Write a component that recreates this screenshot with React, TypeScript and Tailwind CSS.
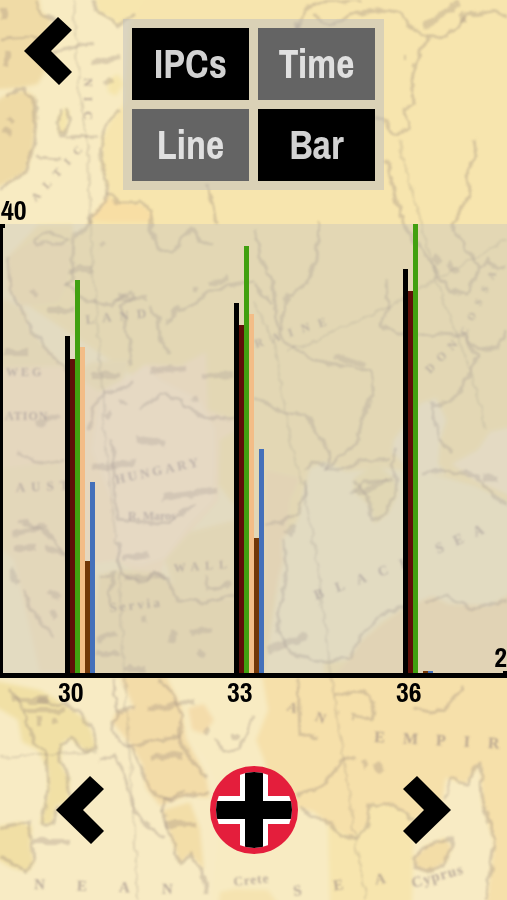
import { useState } from "react";

type Series = { name: string; color: string };
type Round = { label: string; values: number[] };

const MAX_VALUE = 40;

const SERIES: Series[] = [
  { name: "Germany", color: "bg-black" },
  { name: "Soviet Union", color: "bg-[#5e0f08]" },
  { name: "United States", color: "bg-[#41a010]" },
  { name: "United Kingdom", color: "bg-[#f3bd87]" },
  { name: "Italy", color: "bg-[#713607]" },
  { name: "France", color: "bg-[#4470ba]" },
];

const ROUNDS: Round[] = [
  { label: "30", values: [30, 28, 35, 29, 10, 17] },
  { label: "33", values: [33, 31, 38, 32, 12, 20] },
  { label: "36", values: [36, 34, 40, 0, 0.2, 0.2] },
];

/* Filled land and sea areas of the map. */
const AREAS: { fill: string; d: string }[] = [
  { fill: "#f8ebc2", d: "M-9 -9H516V909H-9Z" },
  { fill: "#f0dba6", d: "M-9 -9H38L41 12L52 20L44 40L47 68L38 84L20 88L-9 90Z" },
  { fill: "#efdaa5", d: "M7 94L24 90L35 97L36 120L33 148L26 172L10 181L-9 190V104Z" },
  { fill: "#f7e6ae", d: "M93 -9L98 12L110 18L118 26L134 14L152 -9Z" },
  { fill: "#f5e5ab", d: "M58 118L64 108L69 110L66 132L59 134Z" },
  { fill: "#f5e5ab", d: "M108 80L118 74L124 84L116 96L108 92Z" },
  { fill: "#f7e5ae", d: "M150 -9H516V909H330L322 600L230 500L140 380L20 300L10 255L38 225L72 224L74 236L90 222L92 215L106 205L108 190L101 165L102 138L112 118L124 104L130 20Z" },
  { fill: "#f8dea4", d: "M108 196L118 202L140 204L152 212L150 222L110 222L90 220Z" },
  { fill: "#f6e1b0", d: "M8 256L35 240L72 244L66 285L58 302L20 306L8 290Z" },
  { fill: "#f5e3b2", d: "M8 300L26 312L30 330L48 350L72 374L92 362L130 360L100 440L70 470L-9 480V300Z" },
  { fill: "#fae4be", d: "M-9 368L60 366L100 392L130 376L150 364L180 366L206 352L208 410L246 424L220 440L218 500L190 532L165 560L160 575L140 574L116 560L70 566L40 525L40 500L-9 500Z" },
  { fill: "#fce8c6", d: "M100 392L130 376L146 364L160 380L200 400L215 430L214 500L190 524L165 558L140 566L118 560L112 500L92 450Z" },
  { fill: "#f8e4b8", d: "M-9 470L60 460L80 560L78 673H40L14 560L-9 540Z" },
  { fill: "#f3e0ad", d: "M98 575L120 570L160 573L178 590L235 594L280 570L264 676H90Z" },
  { fill: "#f5e3b1", d: "M165 560L190 532L235 520L268 500L284 520L260 600L178 600Z" },
  { fill: "#f6dfb0", d: "M266 470L300 478L290 500L284 560L266 620Z" },
  { fill: "#f6ebc3", d: "M310 468L326 462L346 472L380 468L420 472L446 478L475 486L516 506V590L490 606L448 604L432 596L404 608L382 622L362 640L348 660L312 664L290 650L276 632L278 600L284 580L282 540L298 520L304 490Z" },
  { fill: "#f4e5ae", d: "M354 478L376 464L394 478L398 494L388 514L374 524L370 506L354 492Z" },
  { fill: "#f6eac6", d: "M420 404L436 398L446 420L440 440L438 464L446 474L420 474L404 464L392 452L394 440Z" },
  { fill: "#f9eac6", d: "M452 464L478 450L490 432L516 426V498L474 480Z" },
  { fill: "#f5dfaf", d: "M404 608L432 596L448 604L490 606L516 592V680H330L348 660L362 640Z" },
  { fill: "#f8ebc4", d: "M-9 676H120L146 688L182 706L184 732L206 760L220 792L216 850L210 909H-9Z" },
  { fill: "#f1e0a5", d: "M-9 680L40 690L64 704L84 718L92 732L96 748L86 752L70 738L62 744L60 762L70 780L68 802L56 806L52 824L40 824L48 792L48 770L38 750L22 742L18 720L-9 704Z" },
  { fill: "#f1dfa5", d: "M-9 828L20 822L32 826L30 846L34 862L28 872L12 868L-9 856Z" },
  { fill: "#f3dca8", d: "M120 676L166 676L182 708L186 738L206 776L210 798L186 796L160 806L146 788L142 764L130 744L112 722L116 712L134 708Z" },
  { fill: "#f3dea8", d: "M162 810L190 802L200 828L204 870L190 854L180 864L172 840Z" },
  { fill: "#f4dcaa", d: "M188 708L204 704L214 720L204 734L192 730Z" },
  { fill: "#f6e0aa", d: "M262 676H516V909H486L490 860L494 842L484 820L482 798L478 764L466 786L448 778L442 800L436 820L414 818L394 806L370 804L368 824L352 838L330 826L314 812L300 808L270 790L264 760L256 740L268 710Z" },
  { fill: "#f8ebc4", d: "M414 820L442 802L446 778L466 784L480 764L482 804L494 842L486 909H412Z" },
  { fill: "#f3dda7", d: "M414 858L426 846L444 838L452 846L446 862L430 872L416 868Z" },
  { fill: "#f5e3b0", d: "M220 892L234 889L268 890L282 909H218Z" },
];

/* Coasts, rivers and borders. */
const INK: string[] = [
  "M0 40Q20 36 38 38",
  "M36 0L41 12L56 22",
  "M93 0L98 12L110 18L118 26L134 14",
  "M7 94L24 88L35 97L36 120L33 148L26 172L10 181L0 190",
  "M120 110Q98 126 101 160L108 190L106 205L92 215",
  "M62 108L58 122L62 136L67 124L68 108",
  "M36 156L60 158 M64 137L98 136 M52 52L96 43",
  "M108 192L118 203L140 203L152 211L150 230L160 250L172 254L180 242L190 228L200 240L212 244",
  "M92 214L90 224L74 237L72 280L66 286",
  "M34 240L50 232L70 240L66 244L36 244Z",
  "M8 256L10 290L26 318L44 348L70 374",
  "M166 323L176 310L192 306L206 294L226 286L254 282",
  "M66 284L88 302L112 304L130 290L136 296L120 306L132 350L130 368",
  "M148 306L158 318L160 336L170 354",
  "M88 430L102 390L116 392L134 382",
  "M140 410L160 394L180 400L204 418L230 420L246 416",
  "M205 186L216 210L218 224",
  "M296 20L306 42L314 50",
  "M294 42L300 22L306 8L320 2L360 0",
  "M314 16L330 26L350 14L370 12L382 10L400 12L412 28L430 38L446 36L460 24L466 14L494 12L507 16",
  "M428 38L416 58L412 80L414 104L406 108L408 128L398 134L386 122L376 116",
  "M474 140L476 154L466 174L470 194L460 210L452 224L462 242L474 260L478 270L488 260L498 270L507 268",
  "M386 160L394 190L404 226L414 240L430 260L438 276L450 292L468 294L478 272",
  "M254 230L262 262L272 282L280 338L290 346L314 360L336 364L370 372L374 394L364 412L356 444L340 456L326 470",
  "M318 222L316 260L308 284L288 294L280 330",
  "M254 284L272 304",
  "M254 396L284 414L306 414L322 440L330 454L328 468L340 472L362 460L388 460",
  "M386 280L388 308L382 324L398 334L440 334L468 336L478 350L498 348L507 330",
  "M468 336L476 358L466 382L450 402L432 404L440 440L452 452",
  "M352 494L364 482L394 480",
  "M354 480L370 502L372 520L386 514L398 480L390 466L396 448",
  "M306 470L312 462L326 464",
  "M306 480L300 512L282 522L266 524",
  "M284 540L286 580L276 630L292 654L324 662L350 658L360 636L386 612L406 606",
  "M422 474L446 470L476 476L490 492L507 506",
  "M426 604L446 594L470 610L506 600",
  "M112 440L116 500L118 520L156 524L172 520L196 504",
  "M64 460L40 464L18 452",
  "M118 540L120 574L140 582L156 574L166 578L178 600L206 602L234 594L250 600",
  "M100 578L114 574L108 604",
  "M204 576L208 590L232 584",
  "M20 522L44 530L64 554L74 570",
  "M22 590L40 622L54 636",
  "M114 682L118 710L112 724L118 740L132 748L142 770L150 790L168 800L190 796L208 792",
  "M160 680L176 700L182 716L180 740L194 764L206 778",
  "M130 746L180 736",
  "M118 712L134 708",
  "M8 690L20 700L26 722L36 742L46 752L48 790L42 824L52 824L58 806L68 804L70 782L60 762L60 744L72 738L88 752L96 748L92 732L82 716L66 704L38 700",
  "M98 760L116 754L126 780L132 806L142 820L164 838",
  "M0 828L30 820L34 860L26 872L0 856",
  "M162 810L172 840L180 864L190 854L202 874L206 894",
  "M160 812L166 800L184 792",
  "M334 696L354 690L370 694L374 710L372 720L352 714L350 720",
  "M298 796L322 786L342 762L354 756",
  "M300 808L318 820L332 824L344 838L356 836L368 824L370 804L394 804L414 820",
  "M444 800L450 778L466 784L480 762L482 796L494 842L486 900",
  "M414 708L430 712L444 710L464 686",
  "M414 858L426 846L450 838L452 846L444 864L428 872L416 868Z",
  "M214 740L224 752L240 748L252 716",
  "M298 680L300 734L316 738",
];

/* Meridians and parallels. */
const GRATICULE: string[] = [
  "M74 0L80 100L88 150L90 224L98 330L106 450L118 560L124 673L130 760L138 900",
  "M254 300L276 350L290 440L304 490L318 570L332 680L342 750L354 830L366 900",
  "M398 140L420 220L440 290L470 370L486 430",
  "M0 757L96 752",
  "M288 352L386 308L507 240",
];

/* Thick soft smudges left by lettering too faint to read. */
const SMUDGES: string[] = [
  "M4 8V20 M6 54V66 M8 116L14 122 M4 130L12 134",
  "M90 62L118 58 M106 84L112 78",
  "M402 58H404 M424 26L460 2 M460 12L464 22",
  "M100 244L102 248 M68 270H94 M46 310H74 M116 298H148",
  "M4 352H28 M30 290L36 296",
  "M36 424L60 416 M92 376H120",
  "M208 284L228 278 M194 290H197",
  "M150 372L184 368 M204 376L232 374",
  "M122 402L124 406 M106 412L110 416 M194 398L196 402",
  "M136 438L166 444 M90 468L136 462",
  "M162 498L218 490",
  "M12 534L46 526 M14 548H36 M10 570L18 584 M46 548L62 554",
  "M124 558L148 554 M124 578L164 576",
  "M144 616L146 624",
  "M172 642L174 632 M190 634L212 630 M200 656L202 650",
  "M96 640L116 632 M96 654H120 M124 668H146",
  "M48 592L60 598 M52 610L56 618",
  "M334 356L366 366 M448 262L458 274 M434 256L438 262",
  "M356 494L388 480 M482 476L498 480",
  "M268 650L306 636 M288 534L292 526",
  "M12 700H48 M24 710H66 M146 708L194 702 M152 758L182 754",
  "M34 842H70 M166 824H196 M40 718V726 M54 718V724",
  "M204 734L210 728 M236 734V740",
  "M364 760L366 768 M376 764L382 772",
];

type MapLabel = { x: number; y: number; size: number; rotate: number; gap: number; text: string };

const LABELS: MapLabel[] = [
  { x: 84, y: 78, size: 12, rotate: 90, gap: 10, text: "NIC" },
  { x: 36, y: 202, size: 11, rotate: -48, gap: 9, text: "ALTIC" },
  { x: 86, y: 324, size: 13, rotate: -6, gap: 8, text: "LAND" },
  { x: 6, y: 376, size: 12, rotate: 0, gap: 3, text: "WEG" },
  { x: 5, y: 420, size: 12, rotate: 0, gap: 1, text: "ATION" },
  { x: 16, y: 492, size: 13, rotate: -3, gap: 6, text: "AUST" },
  { x: 116, y: 484, size: 13, rotate: -12, gap: 3, text: "HUNGARY" },
  { x: 128, y: 520, size: 12, rotate: 0, gap: 0, text: "R. Maros" },
  { x: 174, y: 572, size: 12, rotate: -4, gap: 6, text: "WALL" },
  { x: 110, y: 612, size: 13, rotate: -6, gap: 3, text: "Servia" },
  { x: 256, y: 348, size: 12, rotate: -18, gap: 9, text: "RAINE" },
  { x: 316, y: 600, size: 14, rotate: -20, gap: 13, text: "BLACK" },
  { x: 438, y: 554, size: 14, rotate: -24, gap: 12, text: "SEA" },
  { x: 430, y: 374, size: 12, rotate: -46, gap: 7, text: "DON" },
  { x: 466, y: 336, size: 10, rotate: -64, gap: 9, text: "COSSA" },
  { x: 286, y: 710, size: 14, rotate: 20, gap: 20, text: "AN" },
  { x: 374, y: 742, size: 16, rotate: 3, gap: 18, text: "EMPIR" },
  { x: 413, y: 888, size: 15, rotate: -16, gap: 1, text: "Cyprus" },
  { x: 234, y: 886, size: 13, rotate: -6, gap: 1, text: "Crete" },
  { x: 34, y: 889, size: 15, rotate: 2, gap: 32, text: "NEAN" },
  { x: 294, y: 896, size: 15, rotate: -8, gap: 32, text: "SEA" },
];

function MapBackdrop() {
  return (
    <svg
      className="absolute inset-0 h-full w-full"
      viewBox="0 0 507 900"
      preserveAspectRatio="xMidYMid slice"
      aria-hidden="true"
    >
      <defs>
        <filter id="fill-soft" x="0" y="0" width="100%" height="100%">
          <feGaussianBlur stdDeviation="2" />
        </filter>
        <filter id="ink-soft" x="0" y="0" width="100%" height="100%" colorInterpolationFilters="sRGB">
          <feTurbulence type="fractalNoise" baseFrequency="0.08" numOctaves="2" seed="4" result="noise" />
          <feDisplacementMap
            in="SourceGraphic"
            in2="noise"
            scale="9"
            xChannelSelector="R"
            yChannelSelector="G"
            result="rough"
          />
          <feGaussianBlur in="rough" stdDeviation="1.3" />
        </filter>
        <filter id="text-soft">
          <feGaussianBlur stdDeviation="1.1" />
        </filter>
      </defs>
      <rect width="507" height="900" fill="#f8ebc2" />
      <g filter="url(#fill-soft)">
        {AREAS.map((area) => (
          <path key={area.d} d={area.d} fill={area.fill} />
        ))}
      </g>
      <g filter="url(#ink-soft)" fill="none" stroke="#8f7f78" strokeLinejoin="round">
        <rect width="507" height="900" stroke="none" />
        {GRATICULE.map((d) => (
          <path key={d} d={d} strokeWidth="2" strokeOpacity="0.22" />
        ))}
        {INK.map((d) => (
          <path key={d} d={d} strokeWidth="3" strokeOpacity="0.3" />
        ))}
        {SMUDGES.map((d) => (
          <path key={d} d={d} strokeWidth="6" strokeOpacity="0.28" />
        ))}
      </g>
      <g
        filter="url(#text-soft)"
        fill="#85757a"
        fillOpacity="0.5"
        fontFamily="'Liberation Serif', serif"
        fontWeight="700"
      >
        {LABELS.map((l) => (
          <text
            key={l.text + l.x}
            fontSize={l.size}
            transform={`translate(${l.x} ${l.y}) rotate(${l.rotate})`}
          >
            {l.text.split("").map((ch, i) => (
              <tspan key={i} dx={i === 0 ? 0 : l.gap}>
                {ch}
              </tspan>
            ))}
          </text>
        ))}
      </g>
    </svg>
  );
}

function Chevron({ flip = false }: { flip?: boolean }) {
  return (
    <svg viewBox="0 0 48 70" className={flip ? "h-[70px] w-12 -scale-x-100" : "h-[70px] w-12"} aria-hidden="true">
      <path d="M0 35L34 1L48 14L27 35L48 56L35 69Z" fill="#000" />
    </svg>
  );
}

function Roundel() {
  return (
    <svg viewBox="0 0 88 88" className="size-[88px]" aria-hidden="true">
      <defs>
        <clipPath id="roundel-inner">
          <circle cx="44" cy="44" r="38" />
        </clipPath>
      </defs>
      <circle cx="44" cy="44" r="44" fill="#e41e3c" />
      <g clipPath="url(#roundel-inner)">
        <path d="M30 0H58V30H88V58H58V88H30V58H0V30H30Z" fill="#fff" />
        <path d="M35 0H53V35H88V53H53V88H35V53H0V35H35Z" fill="#000" />
      </g>
    </svg>
  );
}

function Toggle({ label, on, onClick }: { label: string; on: boolean; onClick: () => void }) {
  return (
    <button
      type="button"
      aria-pressed={on}
      onClick={onClick}
      className={
        "h-[72px] w-[117px] text-[40px] leading-none font-bold " +
        (on ? "bg-black text-[#d2d2d2]" : "bg-[#646464] text-[#e0e0e0]")
      }
    >
      {label}
    </button>
  );
}

function BarChart() {
  return (
    <section aria-label="IPCs per round">
      <p className="h-8 pt-1 pl-px text-[28px] leading-7 font-bold">{MAX_VALUE}</p>
      <div className="relative h-[454px] border-b-[5px] border-l-[3px] border-black bg-[#c0c0c0]/36">
        <div className="-ml-[3px] grid h-full grid-cols-3">
          {ROUNDS.map((round) => (
            <div key={round.label} className="flex items-end pl-[65px]">
              {round.values.map((value, i) => (
                <div
                  key={SERIES[i].name}
                  title={`${SERIES[i].name}: ${value}`}
                  className={`w-[5px] shrink-0 ${SERIES[i].color}`}
                  style={{ height: `${(value / MAX_VALUE) * 100}%` }}
                />
              ))}
            </div>
          ))}
        </div>
        <span className="absolute top-0 left-0 h-1 w-1 -translate-x-1/2 bg-black" />
        <span className="absolute right-0 bottom-0 h-0.5 w-1 bg-black" />
        <span className="absolute right-0 bottom-0.5 text-[28px] leading-7 font-bold">2</span>
      </div>
      <div className="grid grid-cols-3 text-[28px] leading-7 font-bold">
        {ROUNDS.map((round) => (
          <span key={round.label} className="pl-[58px]">
            {round.label}
          </span>
        ))}
      </div>
    </section>
  );
}

export default function App() {
  const [metric, setMetric] = useState("IPCs");
  const [view, setView] = useState("Bar");

  return (
    <main className="relative min-h-screen overflow-hidden bg-[#f8ebc2] font-['Liberation_Sans_Narrow','Archivo_Narrow','Liberation_Sans',sans-serif] text-black">
      <MapBackdrop />
      <div className="relative flex min-h-screen flex-col gap-[2px]">
        <header className="flex items-start pt-4 pl-6">
          <button type="button" aria-label="Back">
            <Chevron />
          </button>
          <div className="mt-[3px] ml-[51px] grid grid-cols-[auto_auto] gap-[9px] bg-[#bebebe]/50 p-[9px]">
            <Toggle label="IPCs" on={metric === "IPCs"} onClick={() => setMetric("IPCs")} />
            <Toggle label="Time" on={metric === "Time"} onClick={() => setMetric("Time")} />
            <Toggle label="Line" on={view === "Line"} onClick={() => setView("Line")} />
            <Toggle label="Bar" on={view === "Bar"} onClick={() => setView("Bar")} />
          </div>
        </header>
        <BarChart />
        <footer className="mt-auto flex items-center justify-between px-14 pb-[46px]">
          <button type="button" aria-label="Previous nation">
            <Chevron />
          </button>
          <button type="button" aria-label="Germany">
            <Roundel />
          </button>
          <button type="button" aria-label="Next nation">
            <Chevron flip />
          </button>
        </footer>
      </div>
    </main>
  );
}
